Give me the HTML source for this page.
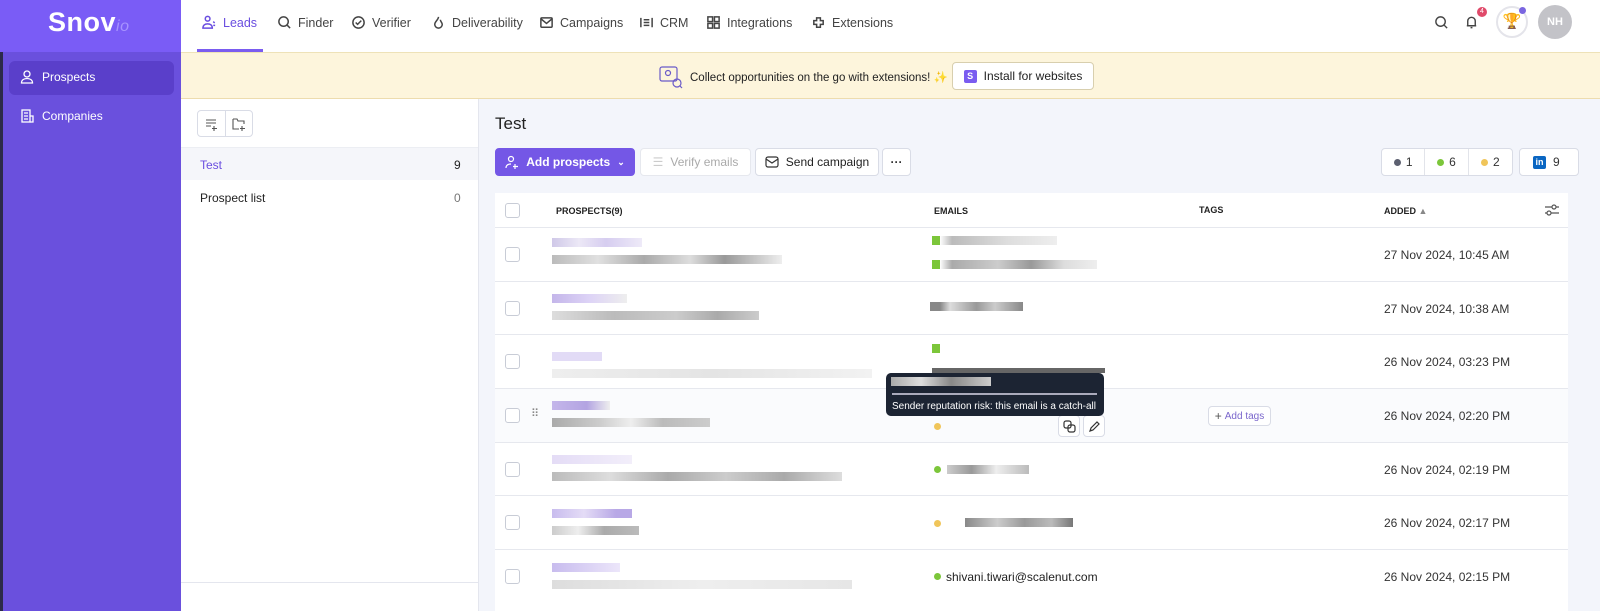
<!DOCTYPE html>
<html><head><meta charset="utf-8"><style>
*{box-sizing:border-box;margin:0;padding:0}
body{width:1600px;height:611px;overflow:hidden;font-family:"Liberation Sans",sans-serif;background:#f3f5fb;position:relative;color:#222}
.a{position:absolute}
.side{left:0;top:0;width:181px;height:611px;background:#6a50dd;border-left:3px solid #2c2a4a}
.logo{left:0;top:0;width:181px;height:52px;background:#7a5cf6}
.nav{left:181px;top:0;width:1419px;height:53px;background:#fff;border-bottom:1px solid #eee2b8}
.ni{position:absolute;top:15px;font-size:12.5px;color:#444;display:flex;align-items:center;gap:6px}
.ni svg{width:15px;height:15px;stroke:#444;fill:none;stroke-width:1.6}
.banner{left:181px;top:53px;width:1419px;height:46px;background:#fdf5dc;border-bottom:1px solid #eddcae}
.list{left:181px;top:99px;width:298px;height:512px;background:#fff;border-right:1px solid #e4e6ee}
.btn{position:absolute;height:28px;border:1px solid #d9dce6;border-radius:4px;background:#fff;font-size:12px;display:flex;align-items:center;justify-content:center;gap:7px}
.tbl{left:495px;top:193px;width:1073px;height:418px;background:#fff}
.row{position:absolute;left:0;width:1073px;height:54px;border-top:1px solid #e6e8ee}
.cb{position:absolute;left:10px;width:15px;height:15px;border:1px solid #c8ccd6;border-radius:3px;background:#fff}
.date{position:absolute;left:889px;font-size:12px;color:#333}
.bl{position:absolute;height:9px}
.dot{position:absolute;width:7px;height:7px;border-radius:50%}
</style></head><body>
<div class="a side"></div>
<div class="a logo"><div class="a" style="left:48px;top:7px;font-size:27px;line-height:30px;font-weight:bold;color:#fff;letter-spacing:0.5px">Snov<span style="font-size:16px;font-style:italic;font-weight:normal;color:#a793ff">io</span></div></div>
<div class="a" style="left:9px;top:61px;width:165px;height:34px;background:#5a3fca;border-radius:6px"></div>
<div class="a" style="left:20px;top:70px;font-size:12px;color:#fff;display:flex;gap:8px;align-items:center"><svg width="14" height="14" viewBox="0 0 14 14" fill="none" stroke="#fff" stroke-width="1.3"><circle cx="7" cy="4" r="3"/><path d="M1.5 13c0-3 2.5-4.5 5.5-4.5s5.5 1.5 5.5 4.5z"/></svg>Prospects</div>
<div class="a" style="left:20px;top:109px;font-size:12px;color:#fff;display:flex;gap:8px;align-items:center"><svg width="14" height="14" viewBox="0 0 14 14" fill="none" stroke="#fff" stroke-width="1.3"><rect x="2" y="1" width="8" height="12"/><path d="M10 7h3v6h-3M4 4h4M4 7h4M4 10h4"/></svg>Companies</div>

<div class="a nav">
<div class="ni" style="left:21px;color:#6a4ee0"><svg viewBox="0 0 16 16" style="stroke:#6a4ee0"><circle cx="6" cy="4" r="2.5"/><path d="M1 14c0-3 2-4.5 5-4.5s5 1.5 5 4.5zM12 7l1.5 1.5M12 11h2"/></svg>Leads</div>
<div class="a" style="left:16px;top:49px;width:66px;height:3px;background:#7a5cf0"></div>
<div class="ni" style="left:96px"><svg viewBox="0 0 16 16"><circle cx="7" cy="7" r="5"/><path d="M11 11l3 3"/></svg>Finder</div>
<div class="ni" style="left:170px"><svg viewBox="0 0 16 16"><circle cx="8" cy="8" r="6"/><path d="M5 8l2 2 4-4"/></svg>Verifier</div>
<div class="ni" style="left:250px"><svg viewBox="0 0 16 16"><path d="M8 2c0 3-4 5-4 8a4 4 0 008 0c0-2-2-3-2-5"/></svg>Deliverability</div>
<div class="ni" style="left:358px"><svg viewBox="0 0 16 16"><rect x="2" y="3" width="12" height="10" rx="1"/><path d="M2 4l6 5 6-5"/></svg>Campaigns</div>
<div class="ni" style="left:458px"><svg viewBox="0 0 16 16"><path d="M2 3v10M14 3v10M5 5h6M5 8h6M5 11h6"/></svg>CRM</div>
<div class="ni" style="left:525px"><svg viewBox="0 0 16 16"><rect x="2" y="2" width="5" height="5"/><rect x="9" y="2" width="5" height="5"/><rect x="2" y="9" width="5" height="5"/><rect x="9" y="9" width="5" height="5"/></svg>Integrations</div>
<div class="ni" style="left:630px"><svg viewBox="0 0 16 16"><path d="M3 6h3V3h4v3h3v4h-3v3H6v-3H3z"/></svg>Extensions</div>
<svg class="a" style="left:1253px;top:15px" width="15" height="15" viewBox="0 0 16 16" fill="none" stroke="#444" stroke-width="1.5"><circle cx="7" cy="7" r="5"/><path d="M11 11l3 3"/></svg>
<svg class="a" style="left:1283px;top:14px" width="15" height="16" viewBox="0 0 16 16" fill="none" stroke="#444" stroke-width="1.5"><path d="M4 12V7a4 4 0 018 0v5H3h10M7 14h2"/></svg>
<div class="a" style="left:1296px;top:7px;width:10px;height:10px;border-radius:50%;background:#e04a6a;font-size:7px;color:#fff;text-align:center;line-height:10px">4</div>
<div class="a" style="left:1315px;top:6px;width:32px;height:32px;border-radius:50%;border:2px solid #e4e4ea;text-align:center;line-height:28px;font-size:15px">🏆</div>
<div class="a" style="left:1338px;top:7px;width:7px;height:7px;border-radius:50%;background:#7a66e0"></div>
<div class="a" style="left:1357px;top:5px;width:34px;height:34px;border-radius:50%;background:#c3c3c8;color:#fff;font-size:11px;font-weight:bold;text-align:center;line-height:34px">NH</div>
</div>

<div class="a banner">
<svg class="a" style="left:478px;top:12px" width="24" height="24" viewBox="0 0 24 24" fill="none" stroke="#6a5ac8" stroke-width="1.2"><rect x="1" y="2" width="17" height="14" rx="2"/><circle cx="9" cy="8" r="2.5"/><circle cx="18" cy="18" r="4"/><path d="M21 21l2 2"/></svg>
<div class="a" style="left:509px;top:17px;font-size:11.5px;color:#222;white-space:nowrap">Collect opportunities on the go with extensions! ✨</div>
<div class="btn" style="left:771px;top:9px;width:142px;height:28px;border-color:#d8cfae"><span style="width:13px;height:13px;background:#7a5cf0;border-radius:2px;color:#fff;font-size:9px;font-weight:bold;text-align:center;line-height:13px">S</span>Install for websites</div>
</div>

<div class="a list">
<div class="btn" style="left:16px;top:11px;width:29px;height:27px;border-radius:4px 0 0 4px"><svg width="14" height="14" viewBox="0 0 14 14" fill="none" stroke="#555" stroke-width="1.1"><path d="M1 3h10M1 6h10M1 9h5M9 9v5M7 11.5h5"/></svg></div>
<div class="btn" style="left:44px;top:11px;width:28px;height:27px;border-radius:0 4px 4px 0"><svg width="14" height="14" viewBox="0 0 14 14" fill="none" stroke="#555" stroke-width="1.1"><path d="M1 2h4l1 2h6v3M1 2v10h6M10 9v5M8 11.5h5"/></svg></div>
<div class="a" style="left:0;top:48px;width:297px;height:33px;background:#f5f6fa;border-top:1px solid #eceef3"></div>
<div class="a" style="left:19px;top:59px;font-size:12px;color:#6a4ee0">Test</div>
<div class="a" style="left:273px;top:59px;font-size:12px;color:#222">9</div>
<div class="a" style="left:19px;top:92px;font-size:12px;color:#222">Prospect list</div>
<div class="a" style="left:273px;top:92px;font-size:12px;color:#777">0</div>
<div class="a" style="left:0;top:483px;width:297px;height:1px;background:#e4e6ee"></div>
</div>

<div class="a" style="left:495px;top:114px;font-size:17px;color:#222">Test</div>
<div class="btn" style="left:495px;top:148px;width:140px;background:#7457e6;border-color:#7457e6;color:#fff;font-weight:bold"><svg width="14" height="14" viewBox="0 0 14 14" fill="none" stroke="#fff" stroke-width="1.2"><circle cx="6" cy="4" r="2.5"/><path d="M1 13c0-3 2-4 5-4M10 9v5M8 11.5h5"/></svg>Add prospects <span style="font-size:9px">⌄</span></div>
<div class="btn" style="left:640px;top:148px;width:111px;color:#aaa;border-color:#e6e8ee"><span style="color:#ccc">☰</span>Verify emails</div>
<div class="btn" style="left:755px;top:148px;width:124px;color:#222"><svg width="14" height="12" viewBox="0 0 14 12" fill="none" stroke="#333" stroke-width="1.2"><rect x="1" y="1" width="12" height="10" rx="2"/><path d="M1 3l6 4 6-4"/></svg>Send campaign</div>
<div class="btn" style="left:882px;top:148px;width:29px;color:#333;font-weight:bold">···</div>
<div class="btn" style="left:1381px;top:148px;width:132px;border-radius:4px;justify-content:flex-start;gap:0;color:#333">
<span style="width:44px;display:flex;align-items:center;justify-content:center;gap:5px;border-right:1px solid #e2e4ea;height:100%"><i class="dot" style="position:static;background:#5c6070"></i>1</span>
<span style="width:44px;display:flex;align-items:center;justify-content:center;gap:5px;border-right:1px solid #e2e4ea;height:100%"><i class="dot" style="position:static;background:#7cc63a"></i>6</span>
<span style="width:44px;display:flex;align-items:center;justify-content:center;gap:5px"><i class="dot" style="position:static;background:#f0c55a"></i>2</span></div>
<div class="btn" style="left:1519px;top:148px;width:60px;justify-content:flex-start;padding-left:13px;color:#333"><span style="width:13px;height:13px;background:#0a66c2;color:#fff;font-size:9px;font-weight:bold;border-radius:2px;text-align:center;line-height:13px">in</span>9</div>

<div class="a tbl">
<div class="cb" style="top:10px"></div>
<div class="a" style="left:61px;top:13px;font-size:9px;font-weight:bold;color:#222">PROSPECTS(9)</div>
<div class="a" style="left:439px;top:13px;font-size:9px;font-weight:bold;color:#222">EMAILS</div>
<div class="a" style="left:704px;top:12px;font-size:9px;font-weight:bold;color:#222">TAGS</div>
<div class="a" style="left:889px;top:13px;font-size:9px;font-weight:bold;color:#222">ADDED <span style="color:#888">▲</span></div>
<svg class="a" style="left:1049px;top:9px" width="16" height="16" viewBox="0 0 16 16" fill="none" stroke="#555" stroke-width="1.2"><path d="M1 5h14M1 11h14"/><circle cx="10" cy="5" r="2" fill="#fff"/><circle cx="5" cy="11" r="2" fill="#fff"/></svg>

<div class="row" style="top:34px"><div class="cb" style="top:19px"></div>
<div class="bl" style="left:57px;top:10px;width:90px;background:linear-gradient(90deg,#cfc8e8,#ece8f6 30%,#d6cdf0 60%,#eeeaf8)"></div>
<div class="bl" style="left:57px;top:27px;width:230px;background:linear-gradient(90deg,#bbb,#e0e0e0 20%,#aaa 40%,#ddd 60%,#999 75%,#eee)"></div>
<div class="bl" style="left:437px;top:8px;width:125px;background:linear-gradient(90deg,#7cc63a 8px,#fff 8px,#bbb 20px,#ddd 60%,#eee)"></div>
<div class="bl" style="left:437px;top:32px;width:165px;background:linear-gradient(90deg,#7cc63a 8px,#fff 8px,#aaa 20px,#ccc 40%,#999 60%,#ddd 80%,#eee)"></div>
<div class="date" style="top:20px">27 Nov 2024, 10:45 AM</div></div>

<div class="row" style="top:88px"><div class="cb" style="top:19px"></div>
<div class="bl" style="left:57px;top:12px;width:75px;background:linear-gradient(90deg,#c4b6ea,#ddd3f6 50%,#eee)"></div>
<div class="bl" style="left:57px;top:29px;width:207px;background:linear-gradient(90deg,#ddd,#bbb 30%,#ccc 60%,#aaa 80%,#ccc)"></div>
<div class="bl" style="left:435px;top:20px;width:93px;background:linear-gradient(90deg,#888 10px,#ddd 20px,#999 50%,#ccc 70%,#888)"></div>
<div class="date" style="top:20px">27 Nov 2024, 10:38 AM</div></div>

<div class="row" style="top:141px"><div class="cb" style="top:19px"></div>
<div class="bl" style="left:57px;top:17px;width:50px;background:#e2dbf6"></div>
<div class="bl" style="left:57px;top:34px;width:320px;background:linear-gradient(90deg,#eee,#e4e4e4 50%,#f2f2f2)"></div>
<div class="bl" style="left:437px;top:9px;width:8px;background:#7cc63a"></div>
<div class="bl" style="left:437px;top:33px;width:173px;height:5px;background:#666"></div>
<div class="date" style="top:20px">26 Nov 2024, 03:23 PM</div></div>

<div class="row" style="top:195px;background:#fafbfd"><div class="cb" style="top:19px"></div>
<div class="a" style="left:36px;top:18px;color:#888;font-size:11px">⠿</div>
<div class="bl" style="left:57px;top:12px;width:58px;background:linear-gradient(90deg,#c4b6ea,#b3a4e2 60%,#eee)"></div>
<div class="bl" style="left:57px;top:29px;width:158px;background:linear-gradient(90deg,#aaa,#ccc 30%,#eee 50%,#bbb 70%,#ccc)"></div>
<div class="dot" style="left:439px;top:34px;background:#f0c55a"></div>
<div class="btn" style="left:563px;top:26px;width:22px;height:22px"><svg width="13" height="13" viewBox="0 0 13 13" fill="none" stroke="#333" stroke-width="1.2"><rect x="1" y="1" width="7" height="7" rx="2"/><rect x="5" y="5" width="7" height="7" rx="2"/></svg></div>
<div class="btn" style="left:588px;top:26px;width:22px;height:22px"><svg width="13" height="13" viewBox="0 0 13 13" fill="none" stroke="#333" stroke-width="1.2"><path d="M2 11l1-3 6-6 2 2-6 6z"/></svg></div>
<div class="btn" style="left:713px;top:17px;width:63px;height:20px;font-size:10px;color:#7a66cc;gap:3px"><span style="color:#555;font-size:12px">+</span>Add tags</div>
<div class="date" style="top:20px">26 Nov 2024, 02:20 PM</div></div>

<div class="row" style="top:249px"><div class="cb" style="top:19px"></div>
<div class="bl" style="left:57px;top:12px;width:80px;background:linear-gradient(90deg,#e4dcf6,#f2eefa)"></div>
<div class="bl" style="left:57px;top:29px;width:290px;background:linear-gradient(90deg,#bbb,#ddd 20%,#aaa 40%,#ccc 60%,#aaa 80%,#ddd)"></div>
<div class="dot" style="left:439px;top:23px;background:#7cc63a"></div>
<div class="bl" style="left:452px;top:22px;width:82px;background:linear-gradient(90deg,#ccc,#999 30%,#eee 60%,#bbb)"></div>
<div class="date" style="top:20px">26 Nov 2024, 02:19 PM</div></div>

<div class="row" style="top:302px"><div class="cb" style="top:19px"></div>
<div class="bl" style="left:57px;top:13px;width:80px;background:linear-gradient(90deg,#c8bcee,#e4dcf6 40%,#b8a8e6 80%)"></div>
<div class="bl" style="left:57px;top:30px;width:87px;background:linear-gradient(90deg,#ccc,#eee 30%,#aaa 60%,#bbb)"></div>
<div class="dot" style="left:439px;top:24px;background:#f0c55a"></div>
<div class="bl" style="left:470px;top:22px;width:108px;background:linear-gradient(90deg,#888,#ccc 30%,#999 55%,#bbb 80%,#777)"></div>
<div class="date" style="top:20px">26 Nov 2024, 02:17 PM</div></div>

<div class="row" style="top:356px"><div class="cb" style="top:19px"></div>
<div class="bl" style="left:57px;top:13px;width:68px;background:linear-gradient(90deg,#c8bcee,#ece6fa)"></div>
<div class="bl" style="left:57px;top:30px;width:300px;background:linear-gradient(90deg,#ddd,#eee 50%,#e6e6e6)"></div>
<div class="dot" style="left:439px;top:23px;background:#7cc63a"></div>
<div class="a" style="left:451px;top:20px;font-size:12px;color:#222">shivani.tiwari@scalenut.com</div>
<div class="date" style="top:20px">26 Nov 2024, 02:15 PM</div></div>
</div>

<div class="a" style="left:886px;top:373px;width:218px;height:43px;background:#1c2433;border-radius:5px;overflow:hidden">
<div class="bl" style="left:5px;top:4px;width:100px;background:linear-gradient(90deg,#aaa,#ddd 30%,#888 60%,#ccc)"></div>
<div class="a" style="left:6px;top:20px;width:205px;height:2px;background:#aab"></div>
<div class="a" style="left:6px;top:28px;font-size:10px;color:#fff;white-space:nowrap">Sender reputation risk: this email is a catch-all</div>
</div>
</body></html>
